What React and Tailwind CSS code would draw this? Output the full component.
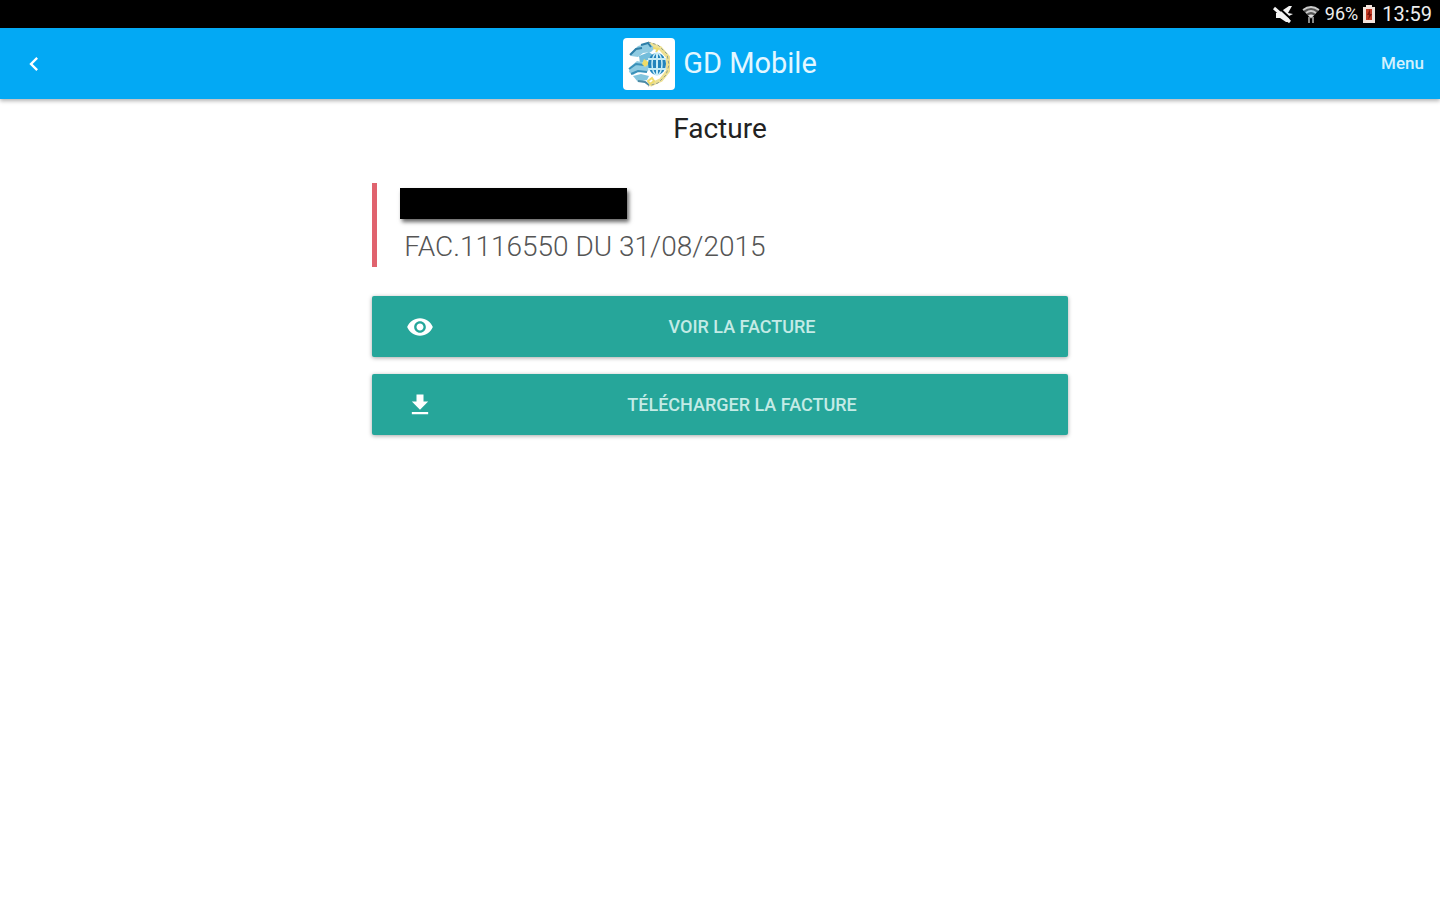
import { MdChevronLeft, MdFileDownload, MdVisibility } from 'react-icons/md'

const actions = [
    { label: 'Voir la facture', icon: MdVisibility },
    { label: 'Télécharger la facture', icon: MdFileDownload },
]

function MutedIcon() {
    return (
        <svg viewBox="0 0 20 20" className="size-5" aria-hidden="true">
            <path d="M3 9l4-1 9-6h3l-4 7 5 1-4 2 1 6-4 0-6-4H3z" fill="#f4f4f4" />
            <path d="M4 2l14 13" stroke="#000" strokeWidth="2" />
            <path d="M1 4l16 14" stroke="#f4f4f4" strokeWidth="3" />
        </svg>
    )
}

function WifiIcon() {
    return (
        <svg viewBox="0 0 20 20" className="size-5" fill="none" aria-hidden="true">
            <path d="M2 6q8-6 16 0l-8 9z" fill="#555" />
            <path d="M2 6q8-6 16 0M5 9q5-4 10 0" stroke="#ccc" strokeWidth="1.800" />
            <path d="M7 11.500q3-2 6 0L10 14z" fill="#ddd" />
            <path d="M8 13v6M12 13v6" stroke="#888" strokeWidth="2" />
        </svg>
    )
}

function BatteryIcon() {
    return (
        <svg viewBox="0 0 14 20" className="h-5 w-3.5" aria-hidden="true">
            <path d="M4 1h6v2h3v16H1V3h3z" fill="#f3e3dc" />
            <path d="M4 5h6v11H4z" fill="#c33a25" />
            <path d="M8 5l-3 6h2l-1 5 4-6H8z" fill="#7c1208" />
        </svg>
    )
}

function Logo() {
    return (
        <svg viewBox="0 0 52 52" className="size-[52px] rounded-sm bg-white" fill="none" aria-hidden="true">
            <path d="M27 6l10 4 8 9v14l-7 9-11 5" stroke="#eee193" strokeWidth="4" />
            <path d="M25 4l10 3 9 9 2 11-3 10-8 8-10 3" stroke="#8f9d90" strokeWidth="1" strokeDasharray="3 2" />
            <path d="M8 15l7-7 10-3 7 5-4 4-8 1-5 4-7-1z" fill="#8fcbe2" />
            <path d="M7 17l6-6 6-1M18 7l7-2 3 4" stroke="#2f7fa8" strokeWidth="2" />
            <path d="M16 18l10-4 4 3-5 5-8 3z" fill="#73bddb" />
            <path d="M7 29l7-6 9 2 5 4-4 5-8-1-6 4-4-3z" fill="#8fcbe2" />
            <path d="M6 31l7-5 8 1M8 36l7-3 9 1" stroke="#3b91b9" strokeWidth="2" />
            <path d="M10 38l8-2 8 2-2 4-9 2z" fill="#83c5de" />
            <path d="M15 43l7 1 4 3" stroke="#4d8ba5" strokeWidth="2" />
            <path d="M21 21l6 4-5 4-3-3z" fill="#efdc68" />
            <path d="M30 10l5 1-2 3M25 43l4-3 2 3-4 3z" stroke="#eedb6e" strokeWidth="2" />
            <ellipse cx="34" cy="26" rx="9" ry="11" fill="#2384bc" />
            <path d="M34 15v22M25 21h18M25 31h18" stroke="#c7ecf6" strokeWidth="2" />
            <ellipse cx="34" cy="26" rx="5" ry="11" stroke="#c7ecf6" strokeWidth="1.500" />
        </svg>
    )
}

export default function App() {
    return (
        <div className="min-h-screen bg-white font-[Roboto,sans-serif]">
            <div className="flex h-7 items-center justify-end bg-black px-2 text-[#eee]">
                <div className="flex items-center gap-2">
                    <MutedIcon />
                    <WifiIcon />
                </div>
                <span className="mx-1 text-lg">96%</span>
                <BatteryIcon />
                <span className="ml-1.5 text-xl">13:59</span>
            </div>

            <header className="grid h-[71px] grid-cols-[1fr_auto_1fr] items-center bg-[#03a9f4] px-4 text-white shadow-[0_2px_4px_rgba(0,0,0,0.3)]">
                <button type="button" aria-label="Retour" className="justify-self-start px-1">
                    <MdChevronLeft className="size-7" stroke="currentColor" />
                </button>
                <div className="flex items-center gap-2">
                    <Logo />
                    <span className="text-[29px] text-[#e4f7ff]">GD Mobile</span>
                </div>
                <button type="button" className="justify-self-end text-[17px] font-medium text-[#d4f1fd]">Menu</button>
            </header>

            <main className="mx-auto w-[48.3%] pt-3">
                <h1 className="text-center text-[28px] leading-9 text-[#222]">Facture</h1>

                <blockquote className="mt-9 border-l-[5px] border-[#e0636e] pt-[5px] pl-[23px]">
                    <div className="h-[31px] w-[227px] bg-black shadow-[2px_3px_4px_rgba(0,0,0,0.6)]" />
                    <p className="px-1 pt-2 text-[28px] leading-10 font-light text-[#555]">FAC.1116550 DU 31/08/2015</p>
                </blockquote>

                <div className="mt-[29px] flex flex-col gap-[17px]">
                    {actions.map(({ label, icon: Icon }) => (
                        <button
                            key={label}
                            type="button"
                            className="flex h-[61px] items-center gap-3 rounded-xs bg-[#26a69a] px-8 text-lg font-medium text-[#c4ebe6] uppercase shadow-[0_1px_4px_rgba(0,0,0,0.35)]"
                        >
                            <span className="flex w-8 justify-center">
                                <Icon className="size-7 text-white" />
                            </span>
                            <span className="flex-1 text-center">{label}</span>
                        </button>
                    ))}
                </div>
            </main>
        </div>
    )
}
